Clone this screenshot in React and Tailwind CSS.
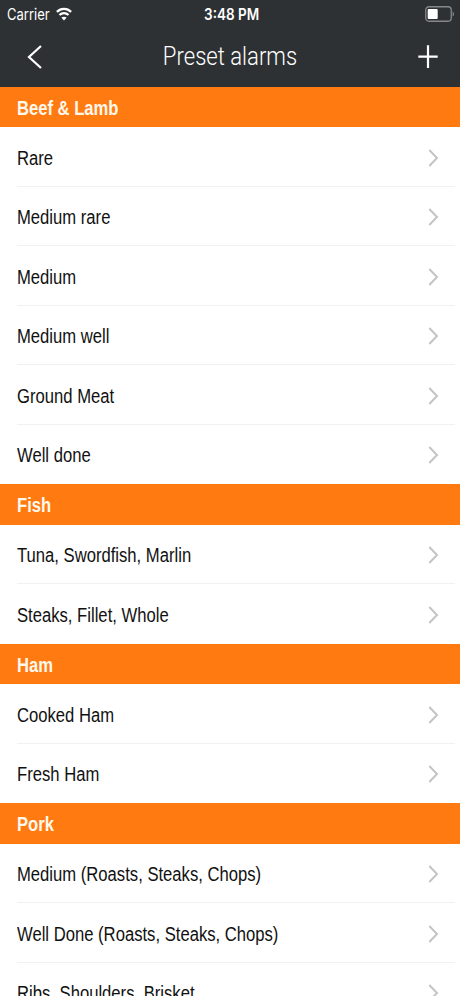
import React from "react";

const sections = [
  {
    title: "Beef & Lamb",
    items: [
      "Rare",
      "Medium rare",
      "Medium",
      "Medium well",
      "Ground Meat",
      "Well done",
    ],
  },
  {
    title: "Fish",
    items: ["Tuna, Swordfish, Marlin", "Steaks, Fillet, Whole"],
  },
  {
    title: "Ham",
    items: ["Cooked Ham", "Fresh Ham"],
  },
  {
    title: "Pork",
    items: [
      "Medium (Roasts, Steaks, Chops)",
      "Well Done (Roasts, Steaks, Chops)",
      "Ribs, Shoulders, Brisket",
    ],
  },
];

function StatusBar() {
  return (
    <div className="grid h-7 grid-cols-3 items-center pl-[7px] pr-[5px] font-['Inter',sans-serif] text-[15.5px] text-white">
      <div className="flex items-center pt-px">
        <span className="w-[49px] origin-left scale-x-[0.84] whitespace-nowrap">
          Carrier
        </span>
        <svg className="mb-px" width="16" height="14" viewBox="0 0 16 14" fill="none" stroke="#fff" strokeWidth="2.4">
          <path d="M0.9 4.9C4.8 0.9 11.2 0.9 15.1 4.9" />
          <path d="M3.5 8C6 5.5 10 5.5 12.5 8" />
          <path d="M8 13.4L5.4 10.7C6.9 9.3 9.1 9.3 10.6 10.7Z" fill="#fff" stroke="none" />
        </svg>
      </div>
      <div className="flex justify-center pt-px pl-px">
        <span className="scale-x-[0.87] whitespace-nowrap font-semibold">
          3:48 PM
        </span>
      </div>
      <svg className="justify-self-end" width="30" height="16" viewBox="0 0 30 16">
        <rect x="0.75" y="0.75" width="25.5" height="14.5" rx="3.2" fill="none" stroke="#85888b" strokeWidth="1.3" />
        <rect x="2.7" y="3" width="10" height="10" rx="1" fill="#fff" />
        <path d="M27.6 5.4Q29 6 29 8T27.6 10.6Z" fill="#85888b" />
      </svg>
    </div>
  );
}

function NavBar() {
  return (
    <div className="grid h-[57px] grid-cols-[1fr_auto_1fr] items-center pl-[27px] pr-[21px] text-white">
      <svg width="16" height="24" viewBox="0 0 16 24" fill="none" stroke="#fff" strokeWidth="2.2">
        <path d="M14 1L2 12L14 23" />
      </svg>
      <h1 className="-ml-[6px] scale-x-[0.85] whitespace-nowrap font-['Roboto',sans-serif] text-[26px] font-light">
        Preset alarms
      </h1>
      <svg className="justify-self-end" width="22" height="24" viewBox="0 0 22 24" stroke="#fff" strokeWidth="2.2">
        <path d="M11 0.2V23M1.3 11.7H20.7" />
      </svg>
    </div>
  );
}

function Row({ label, last }) {
  return (
    <li className="h-[59.5px] pl-[17px] pr-[5px]">
      <div
        className={`flex h-full items-center justify-between border-b pr-[16px] ${
          last ? "border-transparent" : "border-[#f1f1f1]"
        }`}
      >
        <span className="origin-left scale-x-[0.832] whitespace-nowrap pt-0.5 text-[20px] text-[#111]">
          {label}
        </span>
        <svg className="mt-0.5" width="11" height="18" viewBox="0 0 11 18" fill="none" stroke="#c4c4c7" strokeWidth="2">
          <path d="M1.3 1L9 9L1.3 17" />
        </svg>
      </div>
    </li>
  );
}

export default function App() {
  return (
    <div className="h-[996px] w-[460px] overflow-hidden bg-white font-['Liberation_Sans',Arial,sans-serif]">
      <header className="h-[86.9px] bg-[#2e3134]">
        <StatusBar />
        <NavBar />
      </header>
      <main>
        {sections.map((section) => (
          <section key={section.title}>
            <h2 className="flex h-[40.5px] items-center bg-[#ff7b11] pl-[17px] text-[20px] font-bold text-[#fff8ec]">
              <span className="origin-left scale-x-[0.83] whitespace-nowrap pt-px">
                {section.title}
              </span>
            </h2>
            <ul>
              {section.items.map((item, i) => (
                <Row
                  key={item}
                  label={item}
                  last={i === section.items.length - 1}
                />
              ))}
            </ul>
          </section>
        ))}
      </main>
    </div>
  );
}
